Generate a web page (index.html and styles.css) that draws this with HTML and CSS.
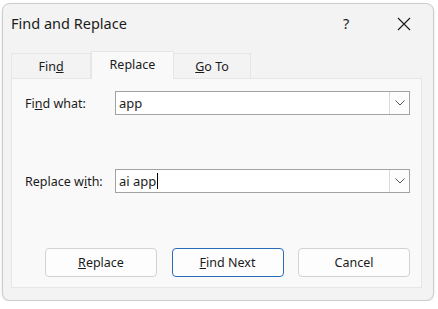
FILE: index.html
```html
<!DOCTYPE html>
<html>
<head>
<meta charset="utf-8">
<link rel="stylesheet" href="styles.css">
</head>
<body>
<div class="window">
  <div class="titlebar">
    <div class="title">Find and Replace</div>
    <div class="help">?</div>
    <div class="close">
      <svg width="14" height="14" viewBox="0 0 14 14"><path d="M1 1 L13 13 M13 1 L1 13" stroke="#1a1a1a" stroke-width="1.1" fill="none"/></svg>
    </div>
  </div>
  <div class="tabs">
    <div class="tab">Fin<u>d</u></div>
    <div class="tab active">Replace</div>
    <div class="tab"><u>G</u>o To</div>
  </div>
  <div class="panel">
    <div class="row">
      <div class="label">Fi<u>n</u>d what:</div>
      <div class="combo">
        <div class="field">app</div>
        <div class="drop"><svg width="10" height="6" viewBox="0 0 10 6"><path d="M0.5 0.5 L5 5 L9.5 0.5" stroke="#555" stroke-width="1" fill="none"/></svg></div>
      </div>
    </div>
    <div class="row">
      <div class="label">Replace w<u>i</u>th:</div>
      <div class="combo">
        <div class="field">ai app<span class="caret"></span></div>
        <div class="drop"><svg width="10" height="6" viewBox="0 0 10 6"><path d="M0.5 0.5 L5 5 L9.5 0.5" stroke="#555" stroke-width="1" fill="none"/></svg></div>
      </div>
    </div>
    <div class="buttons">
      <div class="btn"><u>R</u>eplace</div>
      <div class="btn default"><u>F</u>ind Next</div>
      <div class="btn">Cancel</div>
    </div>
  </div>
</div>
</body>
</html>
```

FILE: styles.css
```css
html, body {
  margin: 0;
  padding: 0;
  background: #ffffff;
}
body {
  font-family: "Segoe UI", "Noto Sans", "Open Sans", sans-serif;
  color: #1b1b1b;
  padding: 3px 0 0 2px;
}
.window {
  box-sizing: border-box;
  width: 432px;
  height: 298px;
  background: #f3f3f3;
  border: 1px solid #cdcdcd;
  border-radius: 8px;
  box-shadow: 0 1px 3px rgba(0,0,0,0.12);
  display: flex;
  flex-direction: column;
}
.titlebar {
  height: 47px;
  display: flex;
  align-items: center;
  padding-left: 8px;
}
.title {
  font-size: 14.5px;
  flex: 1;
  margin-top: -9px;
}
.help {
  font-size: 14.5px;
  width: 20px;
  margin-right: 34px;
  margin-top: -9px;
}
.close {
  width: 14px;
  margin-right: 22px;
  margin-top: -8px;
  display: flex;
}
.tabs {
  display: flex;
  align-items: flex-end;
  height: 27px;
  margin-left: 8px;
}
.tab {
  box-sizing: border-box;
  height: 25px;
  width: 80px;
  border: 1px solid #e6e6e6;
  border-bottom: none;
  background: #f3f3f3;
  font-size: 12.5px;
  text-align: center;
  line-height: 25px;
}
.tab + .tab { border-left: none; }
.tab.active {
  height: 28px;
  width: 83px;
  background: #f9f9f9;
  border: 1px solid #e6e6e6;
  border-bottom: none;
  margin-bottom: -1px;
  position: relative;
  line-height: 26px;
}
.tab:last-child { width: 77px; border-left: none; }
.panel {
  box-sizing: border-box;
  margin-left: 8px;
  width: 411px;
  height: 210px;
  background: #f9f9f9;
  border: 1px solid #e6e6e6;
  padding: 12px 11px 10px 13px;
  display: flex;
  flex-direction: column;
}
.row {
  display: flex;
  align-items: center;
  height: 24px;
  margin-bottom: 54px;
}
.label {
  width: 90px;
  font-size: 12.5px;
}
.combo {
  flex: 1;
  display: flex;
  height: 24px;
  box-sizing: border-box;
  border: 1px solid #a3a3a3;
  background: #ffffff;
}
.field {
  flex: 1;
  font-size: 13px;
  line-height: 22px;
  padding-left: 3px;
  display: flex;
  align-items: center;
}
.caret {
  display: inline-block;
  width: 1px;
  height: 16px;
  background: #000;
  margin-left: 1px;
}
.drop {
  width: 20px;
  box-sizing: border-box;
  border-left: 1px solid #d9d9d9;
  background: #fdfdfd;
  display: flex;
  align-items: center;
  justify-content: center;
}
.buttons {
  margin-top: auto;
  display: flex;
  justify-content: flex-end;
  gap: 14.5px;
}
.btn {
  box-sizing: border-box;
  width: 112px;
  height: 29px;
  border: 1px solid #d2d2d2;
  border-radius: 4px;
  background: #fdfdfd;
  font-size: 12.5px;
  text-align: center;
  line-height: 27px;
}
.btn.default {
  border-color: #2a6cb5;
}
```
